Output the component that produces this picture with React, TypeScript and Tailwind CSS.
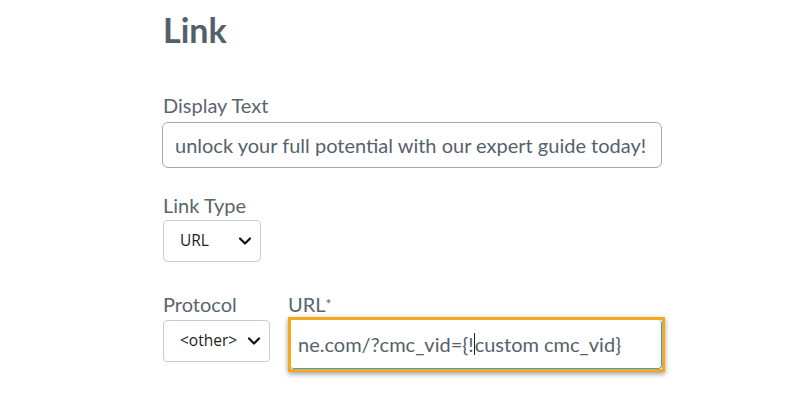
import { ChevronDown } from 'lucide-react';

const font = "font-['Lato','Noto_Sans',sans-serif]";

function Select({ value, width }: { value: string; width: string }) {
  return (
    <div
      className={`${width} h-[42px] flex items-center justify-between pl-[16px] pr-[5px] border border-[#c9cdd1] rounded-[4px] bg-white text-[15.5px] text-[#222] font-['Open_Sans','Noto_Sans',sans-serif]`}
    >
      <span>{value}</span>
      <ChevronDown size={20} strokeWidth={2.6} className="text-[#111]" />
    </div>
  );
}

export default function App() {
  return (
    <div className={`w-[801px] h-[398px] bg-white overflow-hidden ${font}`}>
      <div className="pl-[163px] pt-[9px]">
        {/* Header */}
        <h1 className="text-[34px] leading-[41px] font-bold text-[#535f6b]">Link</h1>

        {/* Display text */}
        <div className="mt-[43px]">
          <label className="block text-[20px] leading-[24px] text-[#5a6570]">Display Text</label>
          <div className="mt-[5px] -ml-px w-[500px] h-[46px] flex items-center px-[12px] border border-[#a5a9ad] rounded-[6px] text-[20px] text-[#56616c] overflow-hidden whitespace-nowrap">
            unlock your full potential with our expert guide today!
          </div>
        </div>

        {/* Link type */}
        <div className="mt-[25px]">
          <label className="block text-[20px] leading-[24px] text-[#5a6570]">Link Type</label>
          <div className="mt-[3px]">
            <Select value="URL" width="w-[98px]" />
          </div>
        </div>

        {/* Protocol + URL */}
        <div className="mt-[30px] flex gap-[18px]">
          <div>
            <label className="block text-[20px] leading-[24px] text-[#5a6570]">Protocol</label>
            <div className="mt-[4px]">
              <Select value="<other>" width="w-[107px]" />
            </div>
          </div>
          <div>
            <label className="block text-[20px] leading-[24px] text-[#5a6570]">
              URL<span className="text-[14px] align-top">*</span>
            </label>
            <div className="mt-px w-[377px] h-[55px] border-[3px] border-[#f5a71e] shadow-[0_2px_5px_rgba(0,0,0,0.4)]">
              <div className="h-full flex items-center pl-[7px] border-r border-b border-[#2aa6dd] rounded-r-[4px] rounded-bl-[3px] text-[20px] text-[#56616c] whitespace-nowrap overflow-hidden">
                <span>ne.com/?cmc_vid={'{'}!</span>
                <span className="inline-block w-px h-[22px] bg-[#222]" />
                <span>custom cmc_vid{'}'}</span>
              </div>
            </div>
          </div>
        </div>
      </div>
    </div>
  );
}
